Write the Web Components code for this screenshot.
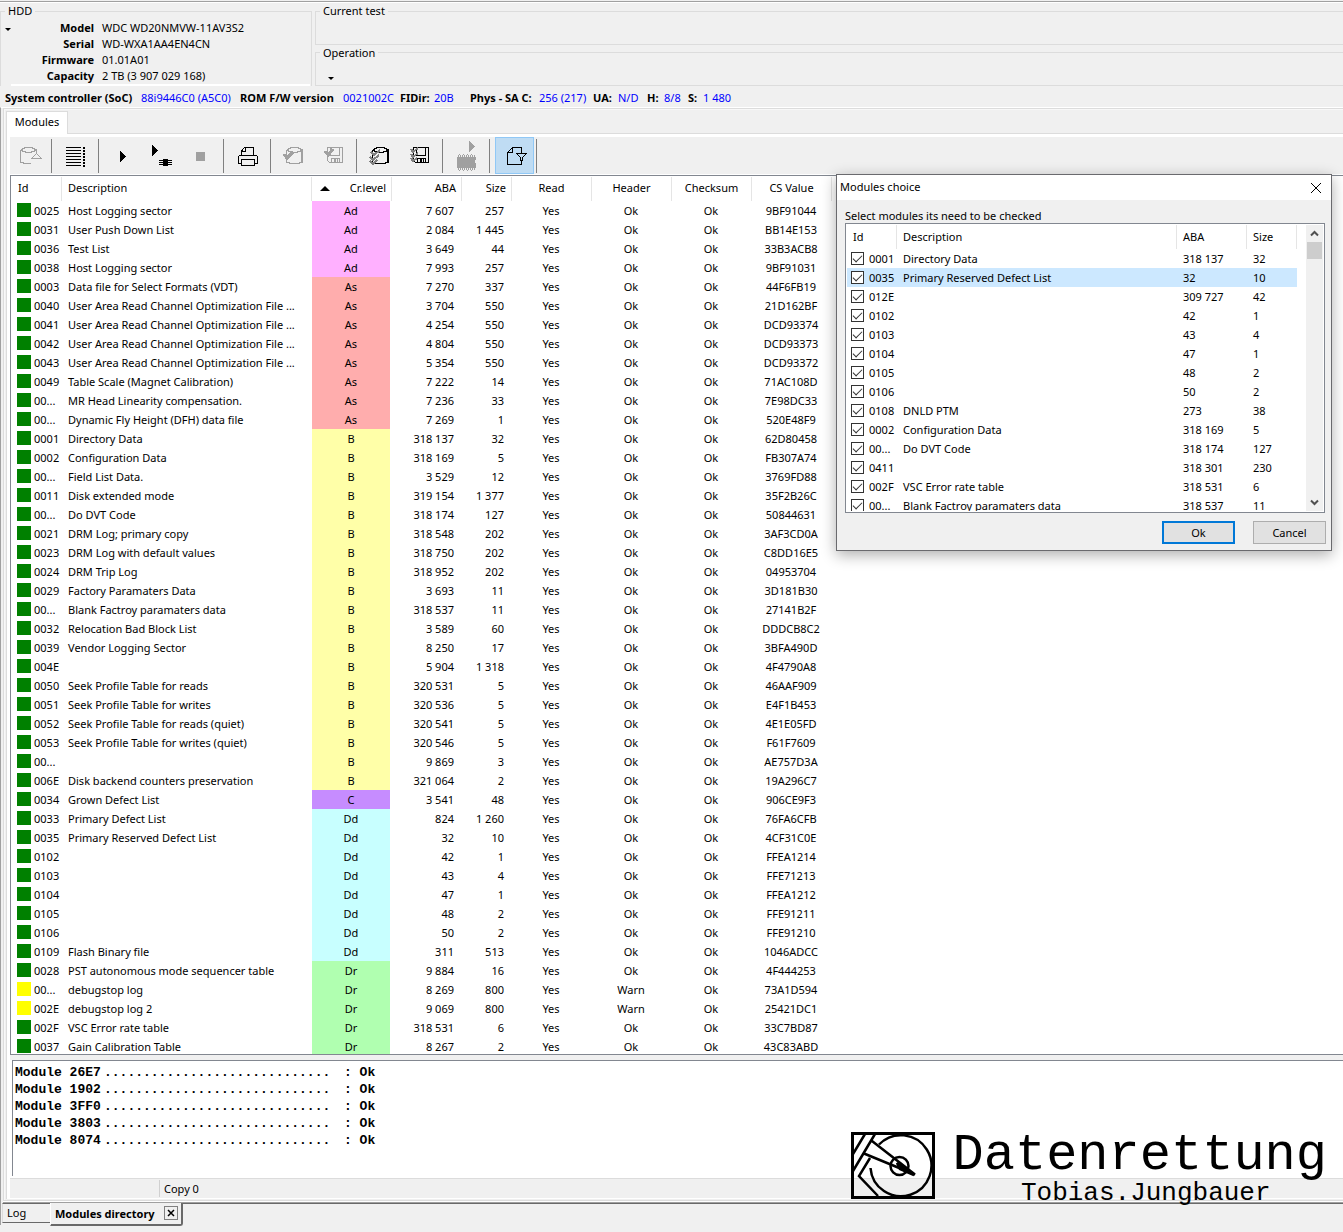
<!DOCTYPE html>
<html lang="en">
<head>
<meta charset="utf-8">
<title>Modules directory</title>
<style>
  html, body { margin: 0; height: 100%; background: #f0f0f0; }
  body { font: 11px/16px "Noto Sans", "Open Sans", sans-serif; color: #000; overflow: hidden; }
</style>
</head>
<body>
<utility-app></utility-app>

<script>
const define = (name, css, html, setup) => {
  const template = document.createElement('template');
  template.innerHTML = `<style>*{box-sizing:border-box}:host{display:block;box-sizing:border-box}${css}</style>${html}`;
  customElements.define(name, class extends HTMLElement {
    constructor() {
      super();
      this.attachShadow({ mode: 'open' }).append(template.content.cloneNode(true));
    }
    connectedCallback() { if (setup && !this.ready) { this.ready = true; setup.call(this, this.shadowRoot); } }
  });
};

/* ---------- data ---------- */
const LEVELS = { Ad: '#ffb0ff', As: '#ffadad', B: '#ffffa8', C: '#c68cff', Dd: '#c8ffff', Dr: '#b0ffb0' };
const MODULES = `0025|Host Logging sector|Ad|7 607|257|9BF91044
0031|User Push Down List|Ad|2 084|1 445|BB14E153
0036|Test List|Ad|3 649|44|33B3ACB8
0038|Host Logging sector|Ad|7 993|257|9BF91031
0003|Data file for Select Formats (VDT)|As|7 270|337|44F6FB19
0040|User Area Read Channel Optimization File ...|As|3 704|550|21D162BF
0041|User Area Read Channel Optimization File ...|As|4 254|550|DCD93374
0042|User Area Read Channel Optimization File ...|As|4 804|550|DCD93373
0043|User Area Read Channel Optimization File ...|As|5 354|550|DCD93372
0049|Table Scale (Magnet Calibration)|As|7 222|14|71AC108D
00...|MR Head Linearity compensation.|As|7 236|33|7E98DC33
00...|Dynamic Fly Height (DFH) data file|As|7 269|1|520E48F9
0001|Directory Data|B|318 137|32|62D80458
0002|Configuration Data|B|318 169|5|FB307A74
00...|Field List Data.|B|3 529|12|3769FD88
0011|Disk extended mode|B|319 154|1 377|35F2B26C
00...|Do DVT Code|B|318 174|127|50844631
0021|DRM Log; primary copy|B|318 548|202|3AF3CD0A
0023|DRM Log with default values|B|318 750|202|C8DD16E5
0024|DRM Trip Log|B|318 952|202|04953704
0029|Factory Paramaters Data|B|3 693|11|3D181B30
00...|Blank Factroy paramaters data|B|318 537|11|27141B2F
0032|Relocation Bad Block List|B|3 589|60|DDDCB8C2
0039|Vendor Logging Sector|B|8 250|17|3BFA490D
004E||B|5 904|1 318|4F4790A8
0050|Seek Profile Table for reads|B|320 531|5|46AAF909
0051|Seek Profile Table for writes|B|320 536|5|E4F1B453
0052|Seek Profile Table for reads (quiet)|B|320 541|5|4E1E05FD
0053|Seek Profile Table for writes (quiet)|B|320 546|5|F61F7609
00...||B|9 869|3|AE757D3A
006E|Disk backend counters preservation|B|321 064|2|19A296C7
0034|Grown Defect List|C|3 541|48|906CE9F3
0033|Primary Defect List|Dd|824|1 260|76FA6CFB
0035|Primary Reserved Defect List|Dd|32|10|4CF31C0E
0102||Dd|42|1|FFEA1214
0103||Dd|43|4|FFE71213
0104||Dd|47|1|FFEA1212
0105||Dd|48|2|FFE91211
0106||Dd|50|2|FFE91210
0109|Flash Binary file|Dd|311|513|1046ADCC
0028|PST autonomous mode sequencer table|Dr|9 884|16|4F444253
00...|debugstop log|Dr|8 269|800|73A1D594|Warn
002E|debugstop log 2|Dr|9 069|800|25421DC1|Warn
002F|VSC Error rate table|Dr|318 531|6|33C7BD87
0037|Gain Calibration Table|Dr|8 267|2|43C83ABD`.split('\n').map(r => r.split('|'));

const CHOICES = `0001|Directory Data|318 137|32
0035|Primary Reserved Defect List|32|10
012E||309 727|42
0102||42|1
0103||43|4
0104||47|1
0105||48|2
0106||50|2
0108|DNLD PTM|273|38
0002|Configuration Data|318 169|5
00...|Do DVT Code|318 174|127
0411||318 301|230
002F|VSC Error rate table|318 531|6
00...|Blank Factroy paramaters data|318 537|11`.split('\n').map(r => r.split('|'));

/* ---------- icons, all drawn on the 39x37 face of a tool button ---------- */
const cylinder = (x) => `<path fill="none" stroke="currentColor" d="M${x} 12.5v13h3v1h10v-1h3v-13M${x} 12.5h2v-1h2v-1h8v1h2v1h2M${x} 13.5h2v1h3v1h6v-1h3v-1h2"/>`;
const floppy = (x) => `<path fill="none" stroke="currentColor" d="M${x} 10.5h15v15h-13l-2-2zM${x + 3} 10.5v8h9v-8M${x + 4} 25.5v-4h8v4"/><path fill="currentColor" d="M${x + 6} 22h2v4h-2zM${x + 9} 22h1v4h-1z"/>`;
const ICONS = {
  load: cylinder(10.5).replace('h10v-1h3v-13', 'h7M26.500 12.500v3') + '<path d="M21.500 21.500h10l-5-5z" fill="#f0f0f0" stroke="currentColor"/>',
  list: '<path stroke="currentColor" d="M9 10.500h15M9 13.500h15M9 16.500h15M9 19.500h15M9 22.500h15M9 25.500h15M9 28.500h15"/><path stroke="currentColor" stroke-width="2" stroke-dasharray="2 1" d="M27 10v20"/>',
  play: '<path fill="currentColor" d="M16 13.500v12l6-6z"/>',
  tree: '<path fill="currentColor" d="M9 8v11l6-5.500zM16 23h13v1H16zM16 25h13v1H16zM16 27h13v1H16zM20 22h5v7h-5z"/>',
  stop: '<path fill="currentColor" d="M14 15h9v9h-9z"/>',
  print: '<path fill="none" stroke="currentColor" d="M12.500 18v-4l3-3.500h9v7.500M12.500 14.500h4v-4M9.500 26.500v-7l1-1.500h17l1 1.500v7h-3M9.500 26.500h3M12.500 22.500h13v6h-13z"/>',
  check: cylinder(10.5) + '<path stroke="currentColor" stroke-width="2" d="M26 13v13"/><path fill="none" stroke="#a0a0a0" stroke-width="3" d="M8 17l3 4 6-6"/>',
  checkSave: floppy(12.5) + '<path fill="none" stroke="#a0a0a0" stroke-width="3" d="M10 14l3 4 5-6"/>',
  checkAll: cylinder(10.5) + '<path stroke="currentColor" stroke-width="2" d="M26 13v13"/><path fill="none" stroke="#808080" stroke-width="2" d="M9 15l3 3 6-5M8 20l3 3 6-5M8 24l3 3 4-4"/>',
  saveAll: floppy(12.5) + '<path fill="none" stroke="#808080" stroke-width="2" d="M10 12l2 3 5-4M10 17l2 3 5-4M10 21l2 3 4-3"/>',
  chip: '<path fill="currentColor" d="M21 4v11l6-5.500zM9 20h19v3h-1v3h1v5H9z"/><path stroke="currentColor" stroke-dasharray="1 1" stroke-width="2" d="M10 19h17M10 32h17"/><path stroke="currentColor" stroke-dasharray="1 3" d="M11 17.500h16M11 33.500h16"/>',
  filter: '<path fill="none" stroke="currentColor" d="M26.500 24v3.500h-14v-12l5-5h9v5M12.500 15.500h5v-5"/><path fill="#bfdcf3" stroke="currentColor" d="M21.500 16.500h10l-4 4v3h-2v-3z"/>'
};

/* ---------- group box: fieldset with its caption on the border ---------- */
define('group-box', `
  fieldset { margin: 0; padding: 0; border: 1px solid #dcdcdc; height: 100%; min-width: 0; }
  legend { margin-left: 4px; padding: 0 3px; line-height: 16px; }`,
  `<fieldset><legend></legend><slot></slot></fieldset>`,
  function (root) { root.querySelector('legend').textContent = this.getAttribute('caption'); });

define('drop-mark', `
  button { display: block; padding: 0; border: 0; background: none; width: 6px; height: 6px; }
  button::before { content: ""; display: block; border: 3px solid transparent; border-top-color: #000; border-bottom: 0; }`,
  `<button type="button" aria-label="Menu"></button>`);

/* ---------- top: drive passport and current state ---------- */
define('drive-header', `
  :host { display: flex; gap: 3px; height: 85px; border-top: 1px solid #a0a0a0; box-shadow: inset 0 1px #fff; padding-top: 1px; overflow: hidden; }
  .hdd { flex: 0 0 312px; height: 84px; }
  .body { display: flex; }
  drop-mark { margin: 7px 0 0 4px; }
  dl { margin: 0; padding-top: 1px; display: grid; grid-template-columns: 83px 1fr; column-gap: 8px; flex: 1; border-bottom: 2px solid #fff; margin-right: 1px; }
  dt { text-align: right; font-weight: 700; } dd { margin: 0; }
  .state { flex: 1; display: flex; flex-direction: column; margin-right: -2px; }
  .test { height: 42px; } .operation { height: 42px; }
  .operation drop-mark { margin: 15px 0 0 12px; }`,
  `<group-box class="hdd" caption="HDD"><div class="body"><drop-mark></drop-mark><dl>
    <dt>Model</dt><dd>WDC WD20NMVW-11AV3S2</dd><dt>Serial</dt><dd>WD-WXA1AA4EN4CN</dd>
    <dt>Firmware</dt><dd>01.01A01</dd><dt>Capacity</dt><dd>2 TB (3 907 029 168)</dd></dl></div></group-box>
   <div class="state"><group-box class="test" caption="Current test"></group-box>
   <group-box class="operation" caption="Operation"><drop-mark></drop-mark></group-box></div>`);

define('soc-line', `
  :host { display: grid; grid-template-columns: 136px 99px 103px 57px 34px 36px 69px 54px 25px 29px 17px 24px 15px auto;
    padding: 4px 0 1px 5px; white-space: nowrap; }
  span { color: #00f; }`,
  `<b>System controller (SoC)</b><span>88i9446C0 (A5C0)</span><b>ROM F/W version</b><span>0021002C</span><b>FIDir:</b><span>20B</span>
   <b>Phys - SA C:</b><span>256 (217)</span><b>UA:</b><span>N/D</span><b>H:</b><span>8/8</span><b>S:</b><span>1 480</span>`);

/* ---------- toolbar ---------- */
define('tool-button', `
  button { display: block; width: 39px; height: 37px; padding: 0; border: 0; background: none; color: #000; }
  button:disabled { color: #a0a0a0; }
  :host([active]) button { background: #bfdcf3; box-shadow: inset 0 0 0 1px #90c8f6; }
  svg { display: block; shape-rendering: crispEdges; }`,
  `<button type="button"><svg width="39" height="37" viewBox="0 0 39 37" aria-hidden="true"></svg></button>`,
  function (root) {
    root.querySelector('svg').innerHTML = ICONS[this.getAttribute('icon')];
    const b = root.querySelector('button');
    b.disabled = this.hasAttribute('off');
    b.setAttribute('aria-label', this.getAttribute('label'));
  });

define('tool-bar', `
  :host { display: flex; background: #f0f0f0; height: 37px; }
  i { width: 1px; margin: 2px 5px 1px 2px; background: #808080; }`,
  `<tool-button icon="load" label="Load" off></tool-button><i></i>
   <tool-button icon="list" label="List"></tool-button><i></i>
   <tool-button icon="play" label="Run"></tool-button><tool-button icon="tree" label="Run selected"></tool-button><tool-button icon="stop" label="Stop" off></tool-button><i></i>
   <tool-button icon="print" label="Print"></tool-button><i></i>
   <tool-button icon="check" label="Check disk" off></tool-button><tool-button icon="checkSave" label="Check file" off></tool-button><i></i>
   <tool-button icon="checkAll" label="Check all on disk"></tool-button><tool-button icon="saveAll" label="Save all"></tool-button><i></i>
   <tool-button icon="chip" label="Run in RAM" off></tool-button><i></i>
   <tool-button icon="filter" label="Choose modules" active></tool-button><i></i>`);

/* ---------- list of modules ---------- */
define('module-table', `
  :host { background: #fff; border: 1px solid #828790; border-right: 0; padding-top: 1px; overflow: hidden; }
  table { table-layout: fixed; border-collapse: separate; border-spacing: 0; width: 820px; }
  th, td { padding: 0; font-weight: 400; white-space: nowrap; height: 19px; line-height: 18px; text-align: center; overflow: hidden; }
  th { height: 24px; line-height: 22px; vertical-align: top; border-right: 1px solid #e5e5e5; }
  th:nth-child(-n+2), td:nth-child(-n+2) { text-align: left; padding-left: 6px; }
  th:first-child { padding-left: 7px; }
  th:nth-child(n+3):nth-child(-n+5) { text-align: right; padding-right: 5px; }
  td:nth-child(4), td:nth-child(5) { text-align: right; padding-right: 8px; }
  td:nth-child(3) { background: var(--level) content-box; padding-right: 2px; }
  td:nth-child(n+6) { padding-right: 2px; }
  .id { display: flex; gap: 3px; }
  .id::before { content: ""; width: 14px; height: 14px; margin-top: 1px; background: var(--state); }
  .sort { display: flex; justify-content: space-between; align-items: center; padding-left: 8px; }
  .sort::before { content: ""; border: 5px solid transparent; border-bottom-color: #000; border-top: 0; }`,
  `<table><colgroup><col style="width:51px"><col style="width:250px"><col style="width:80px"><col style="width:70px"><col style="width:50px"><col style="width:80px"><col style="width:80px"><col style="width:80px"><col style="width:80px"></colgroup>
   <thead><tr><th>Id</th><th>Description</th><th><div class="sort">Cr.level</div></th><th>ABA</th><th>Size</th><th>Read</th><th>Header</th><th>Checksum</th><th>CS Value</th></tr></thead><tbody></tbody></table>`,
  function (root) {
    root.querySelector('tbody').innerHTML = MODULES.map(([id, text, level, aba, size, sum, header]) =>
      `<tr style="--level:${LEVELS[level]};--state:${header ? '#ffff00' : '#008000'}"><td><div class="id">${id}</div></td><td>${text}</td><td>${level}</td><td>${aba}</td><td>${size}</td><td>Yes</td><td>${header || 'Ok'}</td><td>Ok</td><td>${sum}</td></tr>`).join('');
  });

/* ---------- log ---------- */
define('log-view', `
  :host { background: #fff; border-top: 1px solid #828790; border-left: 1px solid #828790; padding: 3px 2px 0;
    font: 700 13px/17px "Liberation Mono", "Courier New", monospace; }
  div { display: grid; grid-template-columns: 89px 240px auto; white-space: pre; }`,
  ``,
  function (root) {
    for (const id of ['26E7', '1902', '3FF0', '3803', '8074']) {
      const line = document.createElement('div');
      line.innerHTML = `<span>Module ${id}</span><span>${'.'.repeat(29)}</span><span>: Ok</span>`;
      root.append(line);
    }
  });

define('status-bar', `
  :host { display: flex; height: 20px; background: #f0f0f0; border-top: 1px solid #dcdcdc; line-height: 20px; }
  .left { width: 150px; margin: 1px 0; border-right: 1px solid #d0d0d0; } .copy { padding-left: 4px; }`,
  `<span class="left"></span><span class="copy">Copy 0</span>`);

/* ---------- window tabs at the bottom ---------- */
define('window-tabs', `
  :host { display: flex; height: 29px; margin-left: 2px; align-items: flex-start; }
  button { font: inherit; padding: 0; border: 0; background: #f0f0f0; text-align: left; }
  .log { width: 48px; height: 20px; padding: 0 0 0 4px; border-top: 1px solid #696969; border-bottom: 1px solid #696969; border-left: 1px solid #dcdcdc; }
  .active { display: flex; gap: 7px; height: 23px; width: 133px; border: 1px solid #fff; border-top: 0; border-right: 2px solid #696969; border-bottom: 2px solid #696969; border-radius: 0 0 3px 0; }
  .name { font-weight: 700; padding: 2px 0 0 4px; white-space: nowrap; height: 20px; width: 106px; }
  .close { width: 14px; height: 14px; margin-top: 3px; border: 1px solid #808080; display: grid; place-items: center; }
  svg { display: block; }
  .rest { flex: 1; height: 2px; border-top: 1px solid #696969; }`,
  `<button class="log" type="button">Log</button>
   <div class="active"><button class="name" type="button">Modules directory</button><button class="close" type="button" aria-label="Close"><svg width="8" height="8" viewBox="0 0 8 8"><path d="M1 1l6 6M7 1L1 7" stroke="#000" stroke-width="1.500"/></svg></button></div>
   <div class="rest"></div>`);

/* ---------- dialog ---------- */
define('check-row', `
  :host { display: grid; grid-template-columns: 49px 280px 70px 50px; height: 19px; line-height: 20px; white-space: nowrap; }
  :host([selected]) { background: #cce8ff; }
  label { display: flex; gap: 5px; padding-left: 4px; }
  input { appearance: none; margin: 3px 0 0; width: 13px; height: 13px; border: 1px solid #333; background: #fff; }
  input:checked::after { content: ""; display: block; width: 8px; height: 4px; margin: 2px 0 0 1px; border: solid #333; border-width: 0 0 1px 1px; transform: rotate(-45deg); }
  span { padding-left: 7px; }`,
  `<label><input type="checkbox" checked><slot name="id"></slot></label><span><slot></slot></span><span><slot name="aba"></slot></span><span><slot name="size"></slot></span>`);

define('module-choice', `
  :host { background: #f0f0f0; border: 1px solid #6a6a6e; box-shadow: 0 4px 14px rgba(0,0,0,.32); }
  header { display: flex; justify-content: space-between; background: #fff; height: 25px; line-height: 24px; padding-left: 3px; }
  header button { border: 0; background: none; padding: 0 9px; }
  svg { display: block; }
  section { padding: 8px 6px 6px 8px; }
  .list { display: flex; justify-content: space-between; height: 290px; margin-top: -1px; background: #fff; border: 1px solid #828790; padding: 1px; overflow: hidden; }
  .rows { width: 450px; overflow: hidden; }
  .head { display: grid; grid-template-columns: 50px 280px 70px 50px; height: 24px; line-height: 24px; }
  .head span { padding-left: 6px; border-right: 1px solid #e5e5e5; }
  .bar { display: flex; flex-direction: column; width: 17px; background: #f0f0f0; }
  .bar svg { width: 17px; height: 17px; } .bar i { height: 17px; background: #cdcdcd; margin: 0 1px; flex: none; } .bar b { flex: 1; }
  footer { display: flex; justify-content: flex-end; gap: 18px; padding-top: 8px; margin-right: -1px; }
  footer button { width: 73px; height: 23px; font: inherit; padding: 0; border: 1px solid #adadad; background: #e1e1e1; color: #000; }
  footer .ok { border: 2px solid #0078d7; }`,
  `<header>Modules choice<button type="button" aria-label="Close"><svg width="12" height="12" viewBox="0 0 12 12"><path d="M1 1l10 10M11 1L1 11" stroke="#000"/></svg></button></header>
   <section><div>Select modules its need to be checked</div>
   <div class="list"><div class="rows"><div class="head"><span>Id</span><span>Description</span><span>ABA</span><span>Size</span></div></div>
   <div class="bar"><svg viewBox="0 0 17 17"><path d="M5 10.500l3.500-3.500 3.500 3.500" fill="none" stroke="#505050" stroke-width="2"/></svg><i></i><b></b><svg viewBox="0 0 17 17"><path d="M5 6.500l3.500 3.500 3.500-3.500" fill="none" stroke="#505050" stroke-width="2"/></svg></div></div>
   <footer><button class="ok" type="button">Ok</button><button type="button">Cancel</button></footer></section>`,
  function (root) {
    root.querySelector('.rows').insertAdjacentHTML('beforeend', CHOICES.map(([id, text, aba, size], i) =>
      `<check-row${i === 1 ? ' selected' : ''}><span slot="id">${id}</span>${text}<span slot="aba">${aba}</span><span slot="size">${size}</span></check-row>`).join(''));
  });

/* ---------- company mark ---------- */
define('brand-mark', `
  :host { display: flex; gap: 18px; font-family: "Liberation Mono", monospace; pointer-events: none; }
  svg { display: block; flex: none; }
  div { text-align: center; }
  .name { font-size: 52px; line-height: 48px; } .owner { font-size: 26px; line-height: 26px; padding-left: 12px; }`,
  `<svg width="84" height="67" viewBox="0 0 84 67" fill="none" stroke="#000" stroke-width="2.500">
    <rect x="1.500" y="1.500" width="81" height="64" stroke-width="3"/>
    <path d="M28 12.500A30.500 30.500 0 1 1 19.500 36"/><circle cx="48.500" cy="34" r="9"/>
    <path d="M21 9L64 42.500 13 21.500M14 2L2 22M24 2L2 39M19 26L8 44l19 20"/><path d="M46 31l17 12-14-6z" fill="#000"/></svg>
   <div><div class="name">Datenrettung</div><div class="owner">Tobias.Jungbauer</div></div>`);

/* ---------- whole window ---------- */
define('utility-app', `
  :host { display: flex; flex-direction: column; height: 100vh; padding-top: 1px; overflow: hidden; position: relative; }
  main { flex: 1; min-height: 0; display: flex; flex-direction: column; border-left: 1px solid #a0a0a0; border-top: 1px solid #fff; padding-left: 2px; margin-bottom: 7px; }
  .outer { flex: 1; min-height: 0; display: flex; flex-direction: column; border: 1px solid #dcdcdc; border-right: 0; padding: 2px 0 1px 2px; box-shadow: inset 1px 1px #f8f8f8; }
  .tab { align-self: flex-start; font: inherit; line-height: 18px; color: inherit; width: 62px; height: 23px; padding: 0 0 2px; background: #fff; border: 1px solid #dcdcdc; border-bottom: 0; margin-bottom: -1px; position: relative; }
  .inner { flex: 1; min-height: 0; display: flex; flex-direction: column; background: #fff; border-top: 1px solid #dcdcdc; border-left: 1px solid #dcdcdc; padding: 3px 0 1px 3px; }
  module-table { flex: 1; min-height: 0; margin-top: 1px; }
  .gap { height: 5px; background: #f0f0f0; }
  log-view { height: 116px; margin: 0 0 2px 2px; }
  .edge { height: 2px; border-top: 1px solid #fff; border-bottom: 1px solid #a0a0a0; }
  window-tabs { margin: 0 0 -7px -1px; }
  module-choice { position: absolute; left: 836px; top: 174px; width: 496px; }
  brand-mark { position: absolute; right: 16px; bottom: 27px; height: 73px; }`,
  `<drive-header></drive-header><soc-line></soc-line>
   <main><div class="outer"><button class="tab" type="button">Modules</button>
     <div class="inner"><tool-bar></tool-bar><module-table></module-table><div class="gap"></div><log-view></log-view><status-bar></status-bar></div></div>
     <div class="edge"></div><window-tabs></window-tabs></main>
   <module-choice role="dialog" aria-label="Modules choice"></module-choice><brand-mark></brand-mark>`);
</script>
</body>
</html>
